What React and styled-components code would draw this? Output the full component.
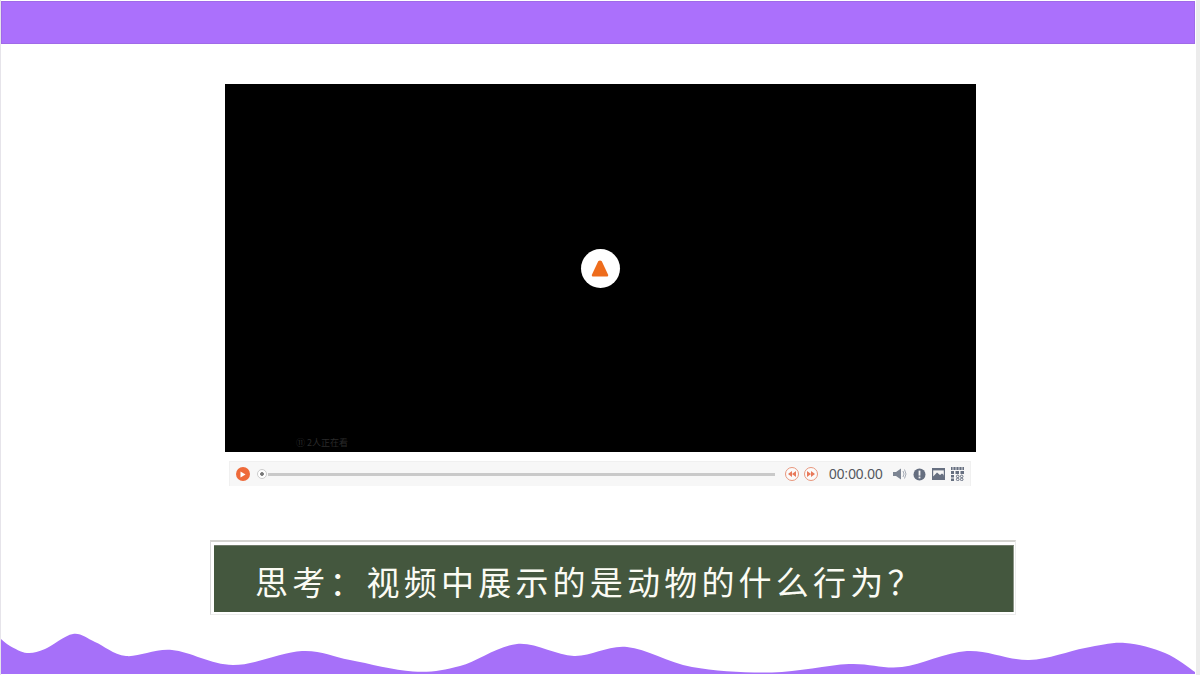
import styled, { createGlobalStyle } from "styled-components";

const GlobalStyle = createGlobalStyle`
  html, body {
    margin: 0;
    padding: 0;
    background: #fff;
  }
`;

const Slide = styled.div`
  width: 1200px;
  height: 675px;
  overflow: hidden;
  display: flex;
  flex-direction: column;
  align-items: flex-start;
  background: #fff;
  border-left: 1px solid #e6e4ea;
  border-right: 4px solid #ececec;
  box-sizing: border-box;
`;

const TopBar = styled.div`
  align-self: stretch;
  height: 43px;
  margin: 1px 1px 0 0;
  background: #ab70fc;
  box-shadow: inset 0 0 0 1px #a06ae8;
  flex: none;
`;

const Video = styled.div`
  position: relative;
  flex: none;
  width: 751px;
  height: 368px;
  margin: 40px 0 0 224px;
  background: #000;
  display: flex;
  align-items: center;
  justify-content: center;
`;

const Viewers = styled.span`
  position: absolute;
  left: 71px;
  bottom: 3px;
  font: 9px "Noto Sans CJK SC", sans-serif;
  color: #2a2a2a;
`;

const BigPlay = styled.div`
  width: 39px;
  height: 39px;
  padding-right: 1px;
  box-sizing: border-box;
  border-radius: 50%;
  background: #fff;
  display: flex;
  align-items: center;
  justify-content: center;
`;

const Controls = styled.div`
  flex: none;
  box-sizing: border-box;
  width: 742px;
  height: 25px;
  margin: 9px 0 0 228px;
  padding: 0 6px;
  display: flex;
  align-items: center;
  background: #f7f7f7;
  border: 1px solid #f0f0f0;
  border-bottom: none;
`;

const RoundButton = styled.span`
  flex: none;
  box-sizing: border-box;
  width: 14px;
  height: 14px;
  border-radius: 50%;
  display: flex;
  align-items: center;
  justify-content: center;
  background: ${(p) => (p.$filled ? "#ee6a3a" : "#fbfbfb")};
  border: ${(p) => (p.$filled ? "none" : "1px solid #e8967c")};
`;

const Knob = styled.span`
  flex: none;
  box-sizing: border-box;
  width: 10px;
  height: 10px;
  margin-left: 7px;
  border-radius: 50%;
  background: radial-gradient(circle, #777 0 1.5px, #fff 2.2px);
  border: 1px solid #ccc;
`;

const Track = styled.div`
  flex: none;
  width: 507px;
  height: 3px;
  margin: 0 10px 0 1px;
  background: #c9c9c9;
`;

const SkipGroup = styled.div`
  display: flex;
  gap: 5px;
`;

const Time = styled.span`
  flex: none;
  width: 54px;
  margin: 0 10px 0 11px;
  font: 13.8px "Liberation Sans", sans-serif;
  color: #55585f;
  white-space: nowrap;
`;

const ToolGroup = styled.div`
  display: flex;
  align-items: center;
  gap: 6px;
`;

const Frame = styled.div`
  flex: none;
  box-sizing: border-box;
  width: 806px;
  height: 75px;
  margin: 54px 0 0 209px;
  padding: 3px 1px 2px 3px;
  background: #fff;
  border: 1px solid #ececec;
  border-left-color: #d8d8d8;
  border-top: 2px solid #d4d4d0;
`;

const Board = styled.div`
  box-sizing: border-box;
  height: 100%;
  padding: 3px 0 0 41px;
  display: flex;
  align-items: center;
  background: #44573e;
  border-top: 1px solid #6f7a69;
  border-right: 1px solid #8b9486;
`;

const Question = styled.h2`
  margin: 0;
  font: 400 33px "Noto Sans CJK SC", sans-serif;
  letter-spacing: 4.2px;
  color: #fbfbf4;
  white-space: nowrap;
`;

const WaveSvg = styled.svg`
  display: block;
  flex: none;
  width: 1200px;
  height: 50px;
  margin: 10px 0 0 -1px;
`;

const wavePoints = [
  [1, 639], [10, 646], [27, 653], [45, 649], [73, 634], [95, 642], [126, 656],
  [172, 650], [233, 665], [302, 651], [350, 660], [413, 671.5], [460, 666],
  [517, 644], [574, 656], [627, 647], [692, 667], [772, 672.5], [849, 664],
  [902, 667], [967, 651], [1029, 660], [1085, 648], [1125, 643], [1165, 653],
  [1195, 672],
];

// catmull-rom through the crest points, so the wave stays smooth
function wavePath(points) {
  let d = `M${points[0][0]} ${points[0][1]}`;
  for (let i = 0; i < points.length - 1; i++) {
    const p0 = points[i - 1] || points[i];
    const p1 = points[i];
    const p2 = points[i + 1];
    const p3 = points[i + 2] || p2;
    const c1x = p1[0] + (p2[0] - p0[0]) / 6;
    const c1y = p1[1] + (p2[1] - p0[1]) / 6;
    const c2x = p2[0] - (p3[0] - p1[0]) / 6;
    const c2y = p2[1] - (p3[1] - p1[1]) / 6;
    d += ` C${c1x} ${c1y} ${c2x} ${c2y} ${p2[0]} ${p2[1]}`;
  }
  return `${d} L1195 674 L1 674 Z`;
}

function SkipIcon({ flip }) {
  return (
    <svg width="8" height="6" viewBox="0 0 8 6" style={flip ? { transform: "scaleX(-1)" } : undefined}>
      <path d="M0 0 L4 3 L0 6 Z M4 0 L8 3 L4 6 Z" fill="#e8795a" />
    </svg>
  );
}

function VolumeIcon() {
  return (
    <svg width="14" height="12" viewBox="0 0 14 12">
      <path d="M0 4 H3 L8 0.5 V11.5 L3 8 H0 Z" fill="#7d8593" />
      <path d="M10 3 Q12 6 10 9 M11.5 1.5 Q14.5 6 11.5 10.5" stroke="#a6acb6" strokeWidth="1" fill="none" />
    </svg>
  );
}

function InfoIcon() {
  return (
    <svg width="13" height="13" viewBox="0 0 13 13">
      <circle cx="6.5" cy="6.5" r="6" fill="#666f80" />
      <rect x="5.6" y="2.6" width="1.8" height="5" fill="#f4f4f4" />
      <rect x="5.6" y="8.6" width="1.8" height="1.8" fill="#f4f4f4" />
    </svg>
  );
}

function PictureIcon() {
  return (
    <svg width="13" height="12" viewBox="0 0 13 12">
      <rect width="13" height="12" fill="#666f80" />
      <rect x="1.2" y="2.4" width="10.6" height="6" fill="#f4f4f4" />
      <path d="M1.2 8.4 L5 4.6 L8 7 L10 5.6 L11.8 7 V10.6 H1.2 Z" fill="#666f80" />
    </svg>
  );
}

function GridIcon() {
  return (
    <svg width="13" height="14" viewBox="0 0 13 14">
      <rect width="13" height="3" fill="#666f80" />
      <path d="M2 0 V3 M5 0 V3 M8 0 V3 M11 0 V3" stroke="#f4f4f4" strokeWidth="0.8" />
      <path
        d="M0 4 h3 v3 h-3 Z M4.5 4 h3.5 v3 h-3.5 Z M9.5 4 h3.5 v3 h-3.5 Z M0 8 h3 v2.5 h-3 Z M0 11.5 h3 v2.5 h-3 Z"
        fill="#666f80"
      />
      <circle cx="6.7" cy="9.4" r="1.3" fill="none" stroke="#666f80" />
      <circle cx="10.7" cy="9.4" r="1.3" fill="none" stroke="#666f80" />
      <circle cx="6.7" cy="12.4" r="1.3" fill="none" stroke="#666f80" />
      <circle cx="10.7" cy="12.4" r="1.3" fill="none" stroke="#666f80" />
    </svg>
  );
}

export default function App() {
  return (
    <>
      <GlobalStyle />
      <Slide>
        <TopBar />
        <Video>
          <BigPlay>
            <svg width="20" height="19" viewBox="0 0 20 19">
              <path
                d="M8.2 2.2 Q10 0.6 11.8 2.2 L18 15.5 Q18.8 17.6 16.6 17.6 H3.4 Q1.2 17.6 2 15.5 Z"
                fill="#ee6c1c"
              />
            </svg>
          </BigPlay>
          <Viewers>⑪ 2人正在看</Viewers>
        </Video>
        <Controls>
          <RoundButton $filled>
            <svg width="6" height="7" viewBox="0 0 6 7">
              <path d="M0.5 0.5 L5.5 3.5 L0.5 6.5 Z" fill="#fff" />
            </svg>
          </RoundButton>
          <Knob />
          <Track />
          <SkipGroup>
            <RoundButton><SkipIcon flip /></RoundButton>
            <RoundButton><SkipIcon /></RoundButton>
          </SkipGroup>
          <Time>00:00.00</Time>
          <ToolGroup>
            <VolumeIcon />
            <InfoIcon />
            <PictureIcon />
            <GridIcon />
          </ToolGroup>
        </Controls>
        <Frame>
          <Board>
            <Question>思考：视频中展示的是动物的什么行为？</Question>
          </Board>
        </Frame>
        <WaveSvg viewBox="0 625 1200 50">
          <path d={wavePath(wavePoints)} fill="#a670f9" />
        </WaveSvg>
      </Slide>
    </>
  );
}
